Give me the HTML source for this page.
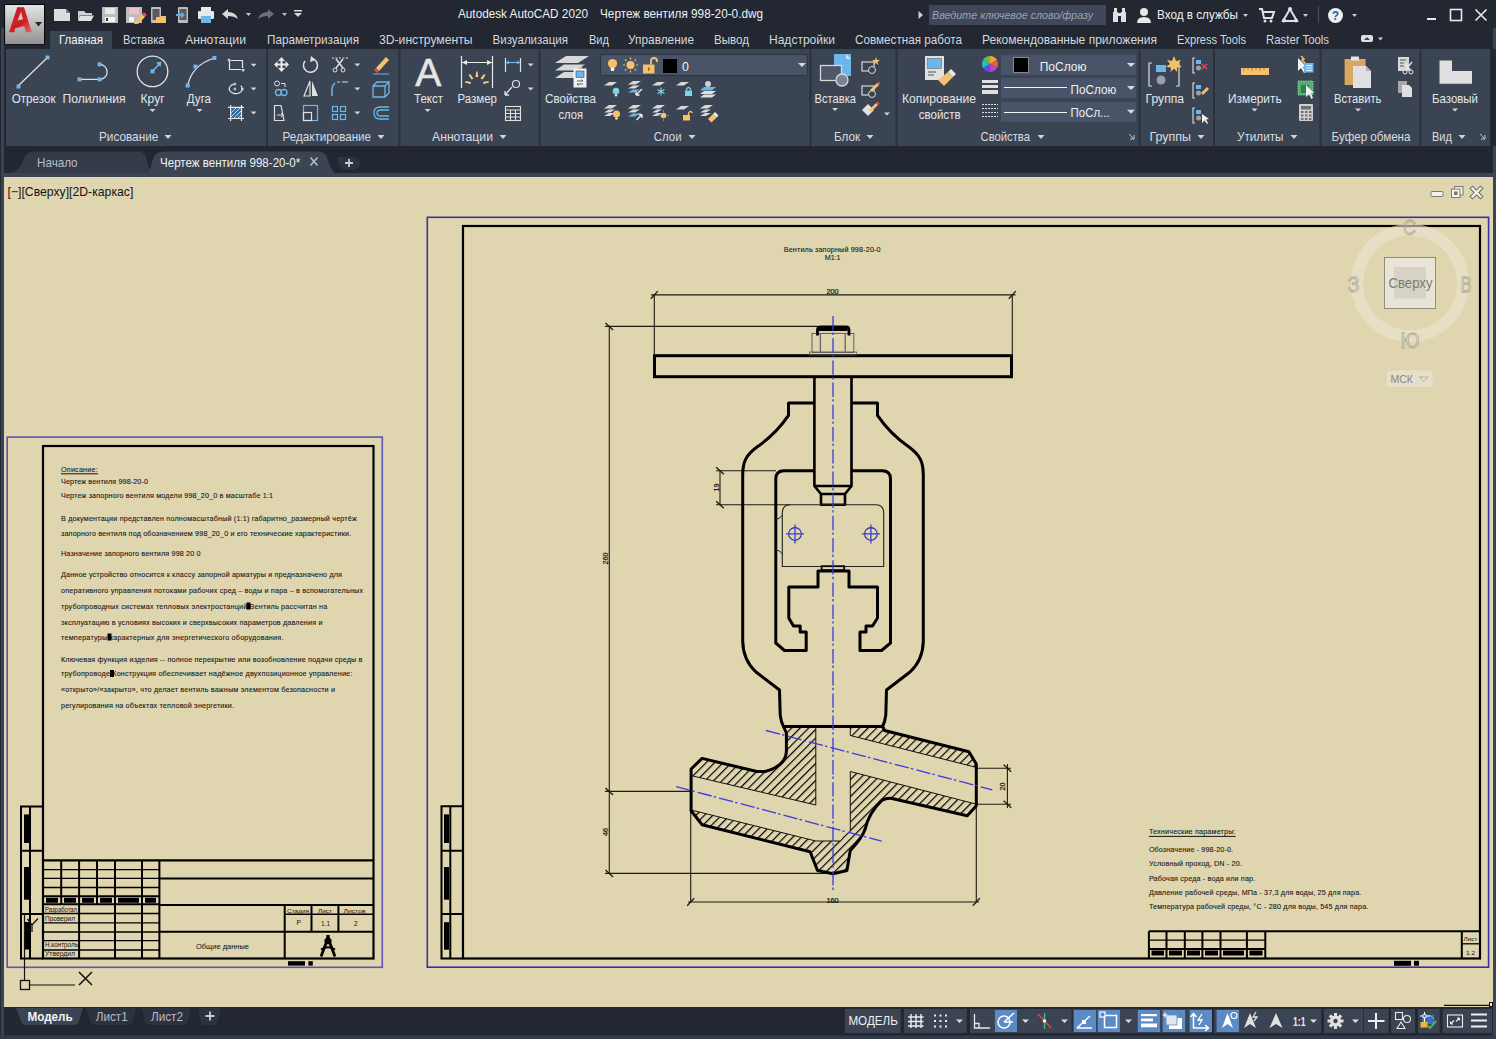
<!DOCTYPE html>
<html><head><meta charset="utf-8">
<style>
html,body{margin:0;padding:0;width:1496px;height:1039px;overflow:hidden;background:#222731;}
svg{display:block;}
</style></head><body>
<svg width="1496" height="1039" viewBox="0 0 1496 1039" shape-rendering="auto">
<rect x="0" y="0" width="1496" height="1039" fill="#222731" />
<rect x="1" y="28" width="3" height="1011" fill="#3a4454" />
<rect x="1493" y="28" width="3" height="1011" fill="#3a4454" />
<defs><linearGradient id="appg" x1="0" y1="0" x2="0" y2="1"><stop offset="0" stop-color="#e4e4e4"/><stop offset="1" stop-color="#929292"/></linearGradient><linearGradient id="redg" x1="0" y1="0" x2="1" y2="1"><stop offset="0" stop-color="#c41a20"/><stop offset="0.6" stop-color="#d42028"/><stop offset="1" stop-color="#e86468"/></linearGradient></defs>
<rect x="4.3" y="4.1" width="40.5" height="40.4" fill="#000" />
<rect x="5.1" y="5" width="38.9" height="39" fill="url(#appg)" />
<path d="M9 32.2 L17.3 7.2 H24.1 L31.8 32.2 H26 L24.3 26.3 L15.2 28.2 L14.3 32.2 Z M17.6 20.6 L23 19.3 L21 11.8 Z" fill="url(#redg)" fill-rule="evenodd"/>
<path d="M12 28 L27 20.5" stroke="#a81218" stroke-width="1.2" opacity="0.5"/>
<path d="M34.9 22.1 H42.1 L38.5 26.5 Z" fill="#2a2a2a"/>
<path d="M54 9 H66 L70 13 V21 H54 Z" fill="#dcdcdc"/><path d="M66 9 L70 13 H66 Z" fill="#222731" opacity="0.5"/>
<path d="M78 11 H84 L86 13 H92 V15 H80 L78 21 Z" fill="#cfcfcf"/><path d="M80 15.5 H94 L91 21 H78 Z" fill="#e0e0e0"/>
<path d="M102 7 H118 V23 H102 Z" fill="#bdbdbd"/><rect x="105" y="8" width="10" height="6" fill="#e8e8e8"/><rect x="105" y="17" width="10" height="5" fill="#f4f4f4"/><rect x="106" y="18" width="2" height="3" fill="#333"/>
<path d="M126 7 H142 V23 H126 Z" fill="#bdbdbd"/><rect x="129" y="8" width="10" height="6" fill="#f0c0c8"/><rect x="129" y="17" width="5" height="5" fill="#f4f4f4"/><path d="M135 22 L142 14 L145 17 L138 24 L134 24 Z" fill="#f5c26b"/><path d="M142 14 L144 12 L147 15 L145 17Z" fill="#e05050"/>
<rect x="151" y="7" width="10" height="16" rx="1" fill="#bdbdbd"/><rect x="152.5" y="9" width="7" height="11" fill="#5a5a5a"/><path d="M156 17 H160 L161 16 H166 V23 H156 Z" fill="#f5c26b"/>
<rect x="178" y="7" width="10" height="16" rx="1" fill="#bdbdbd"/><rect x="179.5" y="9" width="7" height="11" fill="#5a5a5a"/><path d="M176 14 H181 V11.5 L185 15 L181 18.5 V16 H176 Z" fill="#5ab0e8"/>
<rect x="201" y="7" width="10" height="5" fill="#e8e8e8"/><rect x="198" y="11" width="16" height="8" rx="1" fill="#e8e8e8"/><rect x="201" y="16" width="10" height="7" fill="#6cb6ea"/>
<path d="M222 14 L228 9 V12 Q236 12 238 19 Q234 16 228 16 V19 Z" fill="#d8d8d8"/><path d="M246 13 H251 L248.5 16 Z" fill="#cfcfcf"/>
<path d="M274 14 L268 9 V12 Q260 12 258 19 Q262 16 268 16 V19 Z" fill="#6a7080"/><path d="M282 13 H287 L284.5 16 Z" fill="#bfbfbf"/>
<rect x="294" y="10" width="8" height="1.5" fill="#d8d8d8"/><path d="M294 13 H302 L298 17 Z" fill="#d8d8d8"/>
<text x="458" y="18" font-size="12.6" fill="#eef0f2" textLength="130" lengthAdjust="spacingAndGlyphs" font-family="Liberation Sans" >Autodesk AutoCAD 2020</text>
<text x="600" y="18" font-size="12.6" fill="#eef0f2" textLength="163" lengthAdjust="spacingAndGlyphs" font-family="Liberation Sans" >Чертеж вентиля 998-20-0.dwg</text>
<path d="M918.5 11 L923 15 L918.5 19 Z" fill="#d0d0d0"/>
<rect x="929" y="5" width="177" height="20" fill="#3f4758" />
<text x="932" y="19" font-size="11.5" fill="#9aa2b0" font-style="italic" textLength="161" lengthAdjust="spacingAndGlyphs" font-family="Liberation Sans" >Введите ключевое слово/фразу</text>
<rect x="1113" y="12" width="5" height="10" fill="#e0e0e0"/><rect x="1121" y="12" width="5" height="10" fill="#e0e0e0"/><rect x="1117" y="13" width="5" height="3" fill="#e0e0e0"/><rect x="1114" y="8" width="3" height="4" fill="#e0e0e0"/><rect x="1122" y="8" width="3" height="4" fill="#e0e0e0"/>
<circle cx="1144" cy="12" r="4" fill="#e8e8e8"/><path d="M1137 23 Q1137 17 1144 17 Q1151 17 1151 23 Z" fill="#e8e8e8"/>
<text x="1157" y="19" font-size="12.6" fill="#eef0f2" textLength="81" lengthAdjust="spacingAndGlyphs" font-family="Liberation Sans" >Вход в службы</text>
<path d="M1243 14 H1248 L1245.5 17 Z" fill="#cfcfcf"/>
<path d="M1259 9 H1262 L1264 18 H1272 L1274 12 H1263" stroke="#e0e0e0" stroke-width="2" fill="none"/><circle cx="1265" cy="21" r="1.5" fill="#e0e0e0"/><circle cx="1271" cy="21" r="1.5" fill="#e0e0e0"/>
<path d="M1290 9 L1297 21 H1283 Z" stroke="#dce0f0" stroke-width="2" fill="none"/><circle cx="1290" cy="9" r="2" fill="#dce0f0"/><circle cx="1284" cy="20.5" r="2" fill="#dce0f0"/><circle cx="1296" cy="20.5" r="2" fill="#dce0f0"/>
<path d="M1303 14 H1308 L1305.5 17 Z" fill="#cfcfcf"/>
<rect x="1318" y="6" width="1" height="17" fill="#4a5060" />
<circle cx="1335.5" cy="15.5" r="7.5" fill="#f0f0f0"/>
<text x="1335.5" y="20" font-size="12" fill="#2060b0" font-weight="bold" text-anchor="middle" font-family="Liberation Sans" >?</text>
<path d="M1352 14 H1357 L1354.5 17 Z" fill="#cfcfcf"/>
<rect x="1427" y="18" width="9" height="2" fill="#e8e8e8" />
<rect x="1450.5" y="9.5" width="11" height="11" stroke="#e8e8e8" stroke-width="1.6" fill="none"/>
<path d="M1475.5 9.5 L1486.5 20.5 M1486.5 9.5 L1475.5 20.5" stroke="#e8e8e8" stroke-width="1.6"/>
<rect x="50" y="31" width="62" height="18" fill="#3b4453" />
<text x="59" y="43.5" font-size="12.4" fill="#f2f2f2" textLength="44" lengthAdjust="spacingAndGlyphs" font-family="Liberation Sans" >Главная</text>
<text x="123" y="43.5" font-size="12.4" fill="#d4d8de" textLength="41.5" lengthAdjust="spacingAndGlyphs" font-family="Liberation Sans" >Вставка</text>
<text x="185" y="43.5" font-size="12.4" fill="#d4d8de" textLength="61" lengthAdjust="spacingAndGlyphs" font-family="Liberation Sans" >Аннотации</text>
<text x="267" y="43.5" font-size="12.4" fill="#d4d8de" textLength="92" lengthAdjust="spacingAndGlyphs" font-family="Liberation Sans" >Параметризация</text>
<text x="379" y="43.5" font-size="12.4" fill="#d4d8de" textLength="93.5" lengthAdjust="spacingAndGlyphs" font-family="Liberation Sans" >3D-инструменты</text>
<text x="492.6" y="43.5" font-size="12.4" fill="#d4d8de" textLength="75.4" lengthAdjust="spacingAndGlyphs" font-family="Liberation Sans" >Визуализация</text>
<text x="589" y="43.5" font-size="12.4" fill="#d4d8de" textLength="20" lengthAdjust="spacingAndGlyphs" font-family="Liberation Sans" >Вид</text>
<text x="628" y="43.5" font-size="12.4" fill="#d4d8de" textLength="66" lengthAdjust="spacingAndGlyphs" font-family="Liberation Sans" >Управление</text>
<text x="714" y="43.5" font-size="12.4" fill="#d4d8de" textLength="35" lengthAdjust="spacingAndGlyphs" font-family="Liberation Sans" >Вывод</text>
<text x="769" y="43.5" font-size="12.4" fill="#d4d8de" textLength="66" lengthAdjust="spacingAndGlyphs" font-family="Liberation Sans" >Надстройки</text>
<text x="855" y="43.5" font-size="12.4" fill="#d4d8de" textLength="107" lengthAdjust="spacingAndGlyphs" font-family="Liberation Sans" >Совместная работа</text>
<text x="982" y="43.5" font-size="12.4" fill="#d4d8de" textLength="175" lengthAdjust="spacingAndGlyphs" font-family="Liberation Sans" >Рекомендованные приложения</text>
<text x="1177" y="43.5" font-size="12.4" fill="#d4d8de" textLength="69" lengthAdjust="spacingAndGlyphs" font-family="Liberation Sans" >Express Tools</text>
<text x="1266" y="43.5" font-size="12.4" fill="#d4d8de" textLength="63" lengthAdjust="spacingAndGlyphs" font-family="Liberation Sans" >Raster Tools</text>
<rect x="1361" y="35" width="12" height="7" rx="2" fill="#e0e0e0"/><path d="M1364 40 L1367 37 L1370 40Z" fill="#3b4453"/><path d="M1378 37.5 H1383 L1380.5 40.5 Z" fill="#cfcfcf"/>
<rect x="6" y="49" width="1484" height="97" fill="#3b4453" />
<rect x="1490" y="49" width="6" height="97" fill="#222731" />
<rect x="266" y="49" width="2" height="97" fill="#2b313c" />
<rect x="398.5" y="49" width="2" height="97" fill="#2b313c" />
<rect x="538.5" y="49" width="2" height="97" fill="#2b313c" />
<rect x="809.5" y="49" width="2" height="97" fill="#2b313c" />
<rect x="895.5" y="49" width="2" height="97" fill="#2b313c" />
<rect x="1138.5" y="49" width="2" height="97" fill="#2b313c" />
<rect x="1213" y="49" width="2" height="97" fill="#2b313c" />
<rect x="1319.5" y="49" width="2" height="97" fill="#2b313c" />
<rect x="1419.5" y="49" width="2" height="97" fill="#2b313c" />
<text x="99" y="140.6" font-size="12.4" fill="#d8dce2" textLength="59.3" lengthAdjust="spacingAndGlyphs" font-family="Liberation Sans" >Рисование</text>
<path d="M164.5 135 H171.5 L168 139 Z" fill="#d0d4da"/>
<text x="282.5" y="140.6" font-size="12.4" fill="#d8dce2" textLength="88.5" lengthAdjust="spacingAndGlyphs" font-family="Liberation Sans" >Редактирование</text>
<path d="M377.5 135 H384.5 L381 139 Z" fill="#d0d4da"/>
<text x="432" y="140.6" font-size="12.4" fill="#d8dce2" textLength="61" lengthAdjust="spacingAndGlyphs" font-family="Liberation Sans" >Аннотации</text>
<path d="M499.5 135 H506.5 L503 139 Z" fill="#d0d4da"/>
<text x="653.8" y="140.6" font-size="12.4" fill="#d8dce2" textLength="27.7" lengthAdjust="spacingAndGlyphs" font-family="Liberation Sans" >Слои</text>
<path d="M688.5 135 H695.5 L692 139 Z" fill="#d0d4da"/>
<text x="834" y="140.6" font-size="12.4" fill="#d8dce2" textLength="26" lengthAdjust="spacingAndGlyphs" font-family="Liberation Sans" >Блок</text>
<path d="M866.5 135 H873.5 L870 139 Z" fill="#d0d4da"/>
<text x="980.5" y="140.6" font-size="12.4" fill="#d8dce2" textLength="49.5" lengthAdjust="spacingAndGlyphs" font-family="Liberation Sans" >Свойства</text>
<path d="M1037.5 135 H1044.5 L1041 139 Z" fill="#d0d4da"/>
<text x="1149.4" y="140.6" font-size="12.4" fill="#d8dce2" textLength="41.6" lengthAdjust="spacingAndGlyphs" font-family="Liberation Sans" >Группы</text>
<path d="M1197.5 135 H1204.5 L1201 139 Z" fill="#d0d4da"/>
<text x="1237" y="140.6" font-size="12.4" fill="#d8dce2" textLength="46.5" lengthAdjust="spacingAndGlyphs" font-family="Liberation Sans" >Утилиты</text>
<path d="M1290.5 135 H1297.5 L1294 139 Z" fill="#d0d4da"/>
<text x="1331.6" y="140.6" font-size="12.4" fill="#d8dce2" textLength="78.9" lengthAdjust="spacingAndGlyphs" font-family="Liberation Sans" >Буфер обмена</text>
<text x="1432" y="140.6" font-size="12.4" fill="#d8dce2" textLength="20" lengthAdjust="spacingAndGlyphs" font-family="Liberation Sans" >Вид</text>
<path d="M1458.5 135 H1465.5 L1462 139 Z" fill="#d0d4da"/>
<path d="M1129 134 L1134 139 M1134 135 V139 H1130" stroke="#c0c4ca" stroke-width="1" fill="none"/>
<path d="M1480 134 L1485 139 M1485 135 V139 H1481" stroke="#c0c4ca" stroke-width="1" fill="none"/>
<text x="11.7" y="103.2" font-size="12.4" fill="#e4e6ea" textLength="43.9" lengthAdjust="spacingAndGlyphs" font-family="Liberation Sans" >Отрезок</text>
<text x="62.6" y="103.2" font-size="12.4" fill="#e4e6ea" textLength="62.9" lengthAdjust="spacingAndGlyphs" font-family="Liberation Sans" >Полилиния</text>
<text x="140.6" y="103.2" font-size="12.4" fill="#e4e6ea" textLength="24" lengthAdjust="spacingAndGlyphs" font-family="Liberation Sans" >Круг</text>
<text x="186.8" y="103.2" font-size="12.4" fill="#e4e6ea" textLength="24.2" lengthAdjust="spacingAndGlyphs" font-family="Liberation Sans" >Дуга</text>
<path d="M149.5 108.9 H155.5 L152.5 111.9 Z" fill="#d0d4da"/>
<path d="M196.5 108.9 H202.5 L199.5 111.9 Z" fill="#d0d4da"/>
<path d="M18 86 L47.5 57.5" stroke="#e0e0e0" stroke-width="1.3"/>
<rect x="16.5" y="84.5" width="4" height="4" fill="#6cb6ea" />
<rect x="45.5" y="55.5" width="4" height="4" fill="#6cb6ea" />
<path d="M79.5 79.4 H99.6 M99.6 64.4 A7.5 7.5 0 0 1 99.6 79.4" stroke="#e0e0e0" stroke-width="1.3" fill="none"/>
<rect x="77.5" y="77.4" width="4" height="4" fill="#6cb6ea" />
<rect x="97.6" y="77.4" width="4" height="4" fill="#6cb6ea" />
<rect x="97.6" y="62.400000000000006" width="4" height="4" fill="#6cb6ea" />
<circle cx="152.5" cy="71.4" r="15.3" stroke="#e0e0e0" stroke-width="1.3" fill="none"/><path d="M152.5 71.4 L160 63" stroke="#6cb6ea" stroke-width="1.5"/><path d="M161.5 61.5 L156 62.5 L160.5 67 Z" fill="#6cb6ea"/>
<rect x="150.5" y="69.4" width="4" height="4" fill="#6cb6ea" />
<path d="M187.7 85.5 Q192 65 214.4 58" stroke="#e0e0e0" stroke-width="1.3" fill="none"/>
<rect x="185.7" y="83.5" width="4" height="4" fill="#6cb6ea" />
<rect x="193.5" y="64.6" width="4" height="4" fill="#6cb6ea" />
<rect x="212.4" y="56" width="4" height="4" fill="#6cb6ea" />
<path d="M231 60.5 H242.5 V68 M241 69.5 H229.5 V61" stroke="#e8e8e8" stroke-width="1.2" fill="none"/>
<rect x="227.8" y="58.8" width="2.6" height="2.6" fill="#b8d8f0" />
<rect x="241.8" y="68.8" width="2.6" height="2.6" fill="#b8d8f0" />
<path d="M234 84.2 A6.5 4.8 0 1 0 240.8 85.8" stroke="#e8e8e8" stroke-width="1.2" fill="none"/>
<rect x="233.6" y="82.8" width="2.5" height="2.5" fill="#8fd0ee" />
<rect x="233.6" y="87.8" width="2.5" height="2.5" fill="#8fd0ee" />
<rect x="241" y="87.8" width="2.5" height="2.5" fill="#b8d8f0" />
<rect x="230.6" y="107.3" width="10.9" height="11.2" fill="#3a6a98"/>
<clipPath id="hc"><rect x="231.2" y="108" width="9.8" height="10"/></clipPath><g clip-path="url(#hc)" stroke="#a8d8f8" stroke-width="1"><path d="M228 116 L237 107 M228 120 L240 108 M232 120 L242 110 M236 120 L243 113"/></g>
<path d="M228 107.3 H244 M228 118.5 H244 M230.6 105 V121 M241.5 105 V121" stroke="#e8e8e8" stroke-width="1.2"/>
<path d="M250.6 63.8 H256.6 L253.6 66.8 Z" fill="#d0d4da"/>
<path d="M250.6 87.5 H256.6 L253.6 90.5 Z" fill="#d0d4da"/>
<path d="M250.6 111.5 H256.6 L253.6 114.5 Z" fill="#d0d4da"/>
<path d="M281.5 57 L285 61 H282.5 V63.5 H285.5 V61 L289 64.5 L285.5 68 V65.5 H282.5 V68 L285 68 L281.5 72 L278 68 H280.5 V65.5 H277.5 V68 L274 64.5 L277.5 61 V63.5 H280.5 V61 H278 Z" fill="#e8e8e8"/>
<path d="M315 60 A7 7 0 1 1 305 61" stroke="#e0e0e0" stroke-width="1.5" fill="none"/><path d="M311 56 L316 60 L310 62 Z" fill="#e0e0e0"/>
<path d="M332 58 H348" stroke="#e0e0e0" stroke-width="1" stroke-dasharray="2 1.5"/><path d="M336 59 L343 68 M343 59 L336 68" stroke="#e0e0e0" stroke-width="1.5"/><circle cx="335" cy="70" r="2" stroke="#e0e0e0" fill="none"/><circle cx="343" cy="70" r="2" stroke="#e0e0e0" fill="none"/>
<path d="M354.4 63.5 H360.4 L357.4 66.5 Z" fill="#d0d4da"/>
<path d="M376 68 L386 57 L389 60 L379 71 Z" fill="#f5c26b"/><path d="M374 70 L376 68 L379 71 L377 73 Z" fill="#e04848"/><path d="M373 74 H389" stroke="#6cb6ea" stroke-width="1"/>
<circle cx="277" cy="83.5" r="2.5" stroke="#e0e0e0" fill="none"/><path d="M281 83.5 H285 V87" stroke="#e0e0e0" fill="none"/><circle cx="278.5" cy="92.5" r="3" stroke="#6cb6ea" fill="none" stroke-width="1.3"/><circle cx="284" cy="92.5" r="3" stroke="#6cb6ea" fill="none" stroke-width="1.3"/>
<path d="M310 81 L304 96 H310 Z" stroke="#e0e0e0" stroke-width="1.2" fill="none"/><path d="M312 81 L318 96 H312 Z" fill="#e0e0e0"/>
<path d="M332 96 V90 Q332 82 340 82" stroke="#6cb6ea" stroke-width="1.5" fill="none" stroke-dasharray="14 2 20"/><path d="M342 82 H348" stroke="#e0e0e0" stroke-width="1"/>
<path d="M354.4 87.5 H360.4 L357.4 90.5 Z" fill="#d0d4da"/>
<path d="M373 86 L377 82 H389 V93 L385 97 H373 Z M373 86 H385 V97 M385 86 L389 82" stroke="#6cb6ea" stroke-width="1.3" fill="none"/>
<path d="M274.5 105.5 H281 L284 120.5 H274.5 Z" stroke="#e0e0e0" stroke-width="1.2" fill="none"/><path d="M277 115 H283 M281 113 L283.5 115 L281 117" stroke="#e0e0e0" stroke-width="1" fill="none"/>
<rect x="303.5" y="105.5" width="14" height="15" stroke="#6cb6ea" stroke-width="1.2" fill="none"/><rect x="303.5" y="112.5" width="8" height="8" stroke="#e0e0e0" stroke-width="1.2" fill="none"/>
<g stroke="#6cb6ea" stroke-width="1.2" fill="none"><rect x="332.5" y="106.5" width="5" height="5"/><rect x="340.5" y="106.5" width="5" height="5"/><rect x="332.5" y="114.5" width="5" height="5"/><rect x="340.5" y="114.5" width="5" height="5"/></g>
<path d="M354.4 111.5 H360.4 L357.4 114.5 Z" fill="#d0d4da"/>
<path d="M389 107 H380 Q374 107 374 113 Q374 119 380 119 H389 M389 110 H381 Q377 110 377 113 Q377 116 381 116 H389" stroke="#6cb6ea" stroke-width="1.3" fill="none"/>
<text x="428.3" y="85.6" font-size="39" fill="#e6e6e6" text-anchor="middle" textLength="26" lengthAdjust="spacingAndGlyphs" font-family="Liberation Sans" stroke="#e6e6e6" stroke-width="0.6">A</text>
<text x="414" y="103.2" font-size="12.4" fill="#e4e6ea" textLength="29" lengthAdjust="spacingAndGlyphs" font-family="Liberation Sans" >Текст</text>
<path d="M424.6 108.9 H430.6 L427.6 111.9 Z" fill="#d0d4da"/>
<path d="M461.5 56 V88 M492.5 56 V88 M462 62.5 H492" stroke="#e8e8e8" stroke-width="1.2"/><path d="M462 62.5 L467 60 V65 Z M492 62.5 L487 60 V65 Z" fill="#e8e8e8"/>
<g fill="#f5d080"><path d="M476.3 71.5 L477.5 71.5 L478.3 77 L475.5 77 Z"/><path d="M468.5 75 L470 74 L473.5 78.5 L471.5 79.5 Z"/><path d="M485.5 75 L484 74 L480.5 78.5 L482.5 79.5 Z"/><path d="M465 82.5 L465.5 81 L471 82 L470.5 84 Z"/><path d="M489 82.5 L488.5 81 L483 82 L483.5 84 Z"/></g>
<text x="457.6" y="103.2" font-size="12.4" fill="#e4e6ea" textLength="39.4" lengthAdjust="spacingAndGlyphs" font-family="Liberation Sans" >Размер</text>
<path d="M505.5 58 V72 M520.5 58 V72" stroke="#e0e0e0" stroke-width="1.2"/><path d="M506 62.5 H520" stroke="#6cb6ea" stroke-width="1.2"/><path d="M506 62.5 L509 60.5 V64.5 Z M520 62.5 L517 60.5 V64.5 Z" fill="#6cb6ea"/>
<path d="M527.6 63.5 H533.6 L530.6 66.5 Z" fill="#d0d4da"/>
<path d="M505 95 L512 87 M505 95 H509 M505 95 V91" stroke="#e0e0e0" stroke-width="1.3" fill="none"/><circle cx="516" cy="84" r="3.5" stroke="#e0e0e0" stroke-width="1.2" fill="none"/>
<path d="M527.6 87.5 H533.6 L530.6 90.5 Z" fill="#d0d4da"/>
<g stroke="#e0e0e0" stroke-width="1.1" fill="none"><rect x="505.5" y="106.5" width="15" height="14"/><path d="M505.5 110 H520.5 M505.5 113.5 H520.5 M505.5 117 H520.5 M510.5 110 V120.5 M515.5 110 V120.5"/></g>
<path d="M566 56 H589 L578 63 H555 Z" fill="#d8d8d8"/>
<path d="M564 64.5 H585 L576 70.5 H555 Z" fill="#d8d8d8"/>
<path d="M564 72 H585 L576 78 H555 Z" fill="#d8d8d8"/>
<rect x="573.5" y="68.5" width="13" height="19" fill="#f2f2f2"/><rect x="576" y="71" width="8" height="6.5" fill="#6cb6ea" stroke="#333" stroke-width="0.5"/><path d="M577 81 H583 L581.5 79.5 M583 84 H577 L578.5 85.5" stroke="#333" stroke-width="0.8" fill="none"/><rect x="578" y="67" width="4" height="1.5" fill="#ccc"/>
<text x="545" y="103.2" font-size="12.4" fill="#e4e6ea" textLength="51" lengthAdjust="spacingAndGlyphs" font-family="Liberation Sans" >Свойства</text>
<text x="558.5" y="118.5" font-size="12.4" fill="#e4e6ea" textLength="24.5" lengthAdjust="spacingAndGlyphs" font-family="Liberation Sans" >слоя</text>
<rect x="600.5" y="54.5" width="207" height="21" fill="#4a5468" />
<path d="M600.5 54.5 H807.5 V75.5 H600.5 Z" stroke="#2c3340" fill="none"/>
<circle cx="612.5" cy="63.5" r="4.6" fill="#f5c26b"/><path d="M610.5 67.5 H614.5 L614 71 H611 Z" fill="#f0f0f0"/>
<circle cx="630.5" cy="65" r="4" fill="#f5c26b"/><g stroke="#f5c26b" stroke-width="1.2"><path d="M630.5 57.5 V59.5 M630.5 70.5 V72.5 M623 65 H625 M636 65 H638 M625 59.5 L626.3 60.8 M634.7 69.2 L636 70.5 M636 59.5 L634.7 60.8 M625 70.5 L626.3 69.2"/></g>
<rect x="643" y="64.5" width="11.5" height="9" fill="#f5c26b"/><path d="M651 64.5 V61 Q651 58 654 58 Q657 58 657 61 V62" stroke="#f5c26b" stroke-width="1.8" fill="none"/><rect x="648" y="67.5" width="1.5" height="3" fill="#7a6030"/>
<rect x="663" y="59" width="14" height="14" fill="#000" />
<text x="682" y="70.5" font-size="12.4" fill="#f0f0f0" font-family="Liberation Sans" >0</text>
<path d="M798 63 H806 L802 67 Z" fill="#d8dce2"/>
<path d="M609 82 H617 L612 85.5 H604 Z" fill="#d8d8d8"/>
<circle cx="616" cy="91" r="3.3" fill="#7fd4e8"/><rect x="614.8" y="94.3" width="2.4" height="2" fill="#f0f0f0"/>
<path d="M633 81 H641 L636 84.5 H628 Z" fill="#d8d8d8"/>
<path d="M633 85.5 H640 L635 88.5 H628 Z" fill="#d8d8d8"/>
<path d="M633 89.5 H640 L635 92.5 H628 Z" fill="#6cb6ea"/>
<path d="M642 89 L636.5 94.5 M636 95 H639.5 M636 95 V91.5" stroke="#f0f0f0" stroke-width="1.3" fill="none"/>
<path d="M657 82 H665 L660 85.5 H652 Z" fill="#d8d8d8"/>
<g stroke="#7fd4e8" stroke-width="1.1"><path d="M661 87.5 V95.5 M657.5 89.5 L664.5 93.5 M664.5 89.5 L657.5 93.5"/></g>
<path d="M681 82 H689 L684 85.5 H676 Z" fill="#d8d8d8"/>
<rect x="685" y="90.5" width="7" height="5.5" fill="#7fd4e8"/><path d="M686.5 90.5 V89 Q688.5 86 690.5 89 V90.5" stroke="#7fd4e8" stroke-width="1.3" fill="none"/>
<circle cx="708" cy="84" r="3" fill="#d0d0d0"/>
<path d="M704 87 H716 L712 90.5 H700 Z" fill="#6cb6ea"/>
<path d="M704 91 H716 L712 94 H700 Z" fill="#e0e0e0"/>
<path d="M704 94.5 H716 L712 97.5 H700 Z" fill="#e0e0e0"/>
<path d="M609 105 H617 L612 108.5 H604 Z" fill="#d8d8d8"/>
<path d="M609 109.5 H615 L610 112.5 H604 Z" fill="#d8d8d8"/>
<path d="M609 113 H615 L610 116 H604 Z" fill="#d8d8d8"/>
<circle cx="616.5" cy="114" r="3.5" fill="#f5c26b"/><rect x="615.3" y="117.5" width="2.4" height="2" fill="#f0f0f0"/>
<path d="M633 105 H641 L636 108.5 H628 Z" fill="#d8d8d8"/>
<path d="M633 109.5 H640 L635 112.5 H628 Z" fill="#d8d8d8"/>
<path d="M633 113.5 H640 L635 116.5 H628 Z" fill="#6cb6ea"/>
<path d="M636.5 120 L642 114.5 M642 114.5 H638.5 M642 114.5 V118" stroke="#f0f0f0" stroke-width="1.3" fill="none"/>
<path d="M657 105 H665 L660 108.5 H652 Z" fill="#d8d8d8"/>
<path d="M657 109.5 H662 L657 112.5 H652 Z" fill="#d8d8d8"/>
<path d="M657 113 H662 L657 116 H652 Z" fill="#d8d8d8"/>
<circle cx="663.5" cy="115.5" r="2.8" fill="#f5c26b"/><g stroke="#f5c26b" stroke-width="1"><path d="M663.5 110.5 V111.5 M663.5 119.5 V120.5 M658.5 115.5 H659.5 M667.5 115.5 H668.5"/></g>
<path d="M681 106 H689 L684 109.5 H676 Z" fill="#d8d8d8"/>
<rect x="683" y="115" width="7" height="5.5" fill="#f5c26b"/><path d="M688.5 115 V113 Q690.5 110 692.5 113" stroke="#f5c26b" stroke-width="1.3" fill="none"/>
<path d="M705 105 H713 L708 108.5 H700 Z" fill="#d8d8d8"/>
<path d="M705 109.5 H711 L706 112.5 H700 Z" fill="#d8d8d8"/>
<path d="M705 113 H711 L706 116 H700 Z" fill="#d8d8d8"/>
<path d="M708 119 L713 114 L716.5 117.5 L711.5 122.5 Z" fill="#f5c26b"/><path d="M713 114 L715 112 L718.5 115.5 L716.5 117.5 Z" fill="#f0f0f0"/>
<rect x="834" y="54" width="17" height="22" fill="#6cb6ea"/><path d="M846 54 L851 59 H846 Z" fill="#c8e4f8"/>
<rect x="820.5" y="65.5" width="21" height="15" stroke="#d8d8d8" stroke-width="1.3" fill="#4e5868"/><circle cx="842" cy="80" r="6" stroke="#d8d8d8" stroke-width="1.3" fill="#7a8494"/>
<text x="814.6" y="103.2" font-size="12.4" fill="#e4e6ea" textLength="41.4" lengthAdjust="spacingAndGlyphs" font-family="Liberation Sans" >Вставка</text>
<path d="M832 108.1 H838 L835 111.1 Z" fill="#d0d4da"/>
<rect x="862" y="62" width="12" height="9" stroke="#d8d8d8" stroke-width="1.2" fill="none"/><circle cx="872" cy="70" r="3.5" stroke="#d8d8d8" fill="#3b4453"/><path d="M876 57 L877 60 L880 60 L877.5 62 L878.5 65 L876 63 L873.5 65 L874.5 62 L872 60 L875 60Z" fill="#f5c26b"/>
<rect x="862" y="86" width="12" height="9" stroke="#d8d8d8" stroke-width="1.2" fill="none"/><circle cx="872" cy="94" r="3.5" stroke="#d8d8d8" fill="#3b4453"/><path d="M870 90 L877 83 L879 85 L872 92 Z" fill="#f5c26b"/><path d="M877 83 L878.5 81.5 L880.5 83.5 L879 85Z" fill="#e05050"/>
<path d="M862 110 L868 116 L874 110 L868 104 Z" fill="#e0e0e0"/><path d="M869 110 L876 103 L878 105 L871 112 Z" fill="#f5c26b"/><path d="M876 103 L877.5 101.5 L879.5 103.5 L878 105Z" fill="#e05050"/>
<path d="M884 112.5 H890 L887 115.5 Z" fill="#d0d4da"/>
<rect x="925" y="56" width="19" height="24" fill="#e0e0e0"/><rect x="927.5" y="58.5" width="14" height="10" fill="#6cb6ea" stroke="#555" stroke-width="0.5"/><path d="M928 72 H936 M928 75 H934" stroke="#555" stroke-width="1"/>
<path d="M938 80 L948 72 L953 77 L944 86 Z" fill="#f5c26b"/><path d="M948 72 L951 69 L956 74 L953 77Z" fill="#e8e8e8"/>
<text x="902" y="103.2" font-size="12.4" fill="#e4e6ea" textLength="74" lengthAdjust="spacingAndGlyphs" font-family="Liberation Sans" >Копирование</text>
<text x="918.7" y="118.5" font-size="12.4" fill="#e4e6ea" textLength="41.9" lengthAdjust="spacingAndGlyphs" font-family="Liberation Sans" >свойств</text>
<g transform="translate(990,64)"><path d="M0 0 L0.00 -8.00 A8 8 0 0 1 6.93 -4.00 Z" fill="#f5a030"/><path d="M0 0 L6.93 -4.00 A8 8 0 0 1 6.93 4.00 Z" fill="#e85a48"/><path d="M0 0 L6.93 4.00 A8 8 0 0 1 0.00 8.00 Z" fill="#b048c8"/><path d="M0 0 L0.00 8.00 A8 8 0 0 1 -6.93 4.00 Z" fill="#6848e0"/><path d="M0 0 L-6.93 4.00 A8 8 0 0 1 -6.93 -4.00 Z" fill="#30b8c0"/><path d="M0 0 L-6.93 -4.00 A8 8 0 0 1 -0.00 -8.00 Z" fill="#58c058"/></g>
<g fill="#e0e0e0"><rect x="982" y="80" width="16" height="3"/><rect x="982" y="85" width="16" height="3"/><rect x="982" y="90" width="16" height="4"/></g>
<g stroke="#e0e0e0" stroke-width="1" stroke-dasharray="2 1"><path d="M982 104.5 H998 M982 108.5 H998 M982 112.5 H998 M982 116.5 H998"/></g>
<rect x="1001" y="55" width="135" height="20" fill="#4a5468" />
<path d="M1127 63.0 H1135 L1131 67.0 Z" fill="#d8dce2"/>
<rect x="1001" y="78" width="135" height="20" fill="#4a5468" />
<path d="M1127 86.0 H1135 L1131 90.0 Z" fill="#d8dce2"/>
<rect x="1001" y="102" width="135" height="19.700000000000003" fill="#4a5468" />
<path d="M1127 109.85 H1135 L1131 113.85 Z" fill="#d8dce2"/>
<rect x="1013" y="57" width="16" height="16" fill="#000" />
<rect x="1013.5" y="57.5" width="15" height="15" stroke="#888" stroke-width="1" fill="none"/>
<text x="1039.7" y="70.5" font-size="12.4" fill="#f0f0f0" textLength="46.8" lengthAdjust="spacingAndGlyphs" font-family="Liberation Sans" >ПоСлою</text>
<path d="M1004 87.5 H1067 M1004 112.5 H1067" stroke="#f4f4f4" stroke-width="1.1"/>
<text x="1070.6" y="93.5" font-size="12.4" fill="#f0f0f0" textLength="45.7" lengthAdjust="spacingAndGlyphs" font-family="Liberation Sans" >ПоСлою</text>
<text x="1070.6" y="117" font-size="12.4" fill="#f0f0f0" textLength="39" lengthAdjust="spacingAndGlyphs" font-family="Liberation Sans" >ПоСл...</text>
<path d="M1152 63 H1149 V86 H1152 M1176 63 H1179 V86 H1176" stroke="#e0e0e0" stroke-width="1.2" fill="none"/><rect x="1156" y="65" width="10" height="7" fill="#6cb6ea"/><circle cx="1161" cy="80" r="4.5" fill="#9aa0a8"/>
<path d="M1174 56 L1176 61 L1181 60 L1178 64 L1182 67 L1177 67.5 L1177 72 L1174 68.5 L1170.5 72 L1171 67.5 L1166 67 L1170 64 L1167 60 L1172 61 Z" fill="#f5c26b"/>
<text x="1145.6" y="103.2" font-size="12.4" fill="#e4e6ea" textLength="38.4" lengthAdjust="spacingAndGlyphs" font-family="Liberation Sans" >Группа</text>
<path d="M1195 58 H1193 V73 H1195" stroke="#e0e0e0" stroke-width="1.1" fill="none"/><rect x="1196" y="60" width="5" height="4" fill="#6cb6ea"/><circle cx="1198.5" cy="68" r="2.5" fill="#9aa0a8"/><path d="M1202 64 L1207 69 M1207 64 L1202 69" stroke="#e04848" stroke-width="1.5"/>
<path d="M1195 83 H1193 V98 H1195" stroke="#e0e0e0" stroke-width="1.1" fill="none"/><rect x="1196" y="85" width="5" height="4" fill="#6cb6ea"/><circle cx="1198.5" cy="93" r="2.5" fill="#9aa0a8"/><path d="M1201 93 L1207 87 L1209 89 L1203 95 Z" fill="#f5c26b"/>
<path d="M1195 108 H1193 V123 H1195" stroke="#e0e0e0" stroke-width="1.1" fill="none"/><rect x="1196" y="110" width="5" height="4" fill="#6cb6ea"/><circle cx="1198.5" cy="118" r="2.5" fill="#9aa0a8"/><path d="M1202 114 L1202 123 L1204.5 120.5 L1207 124 L1208 123 L1206 119.5 L1209 119 Z" fill="#f0f0f0"/>
<rect x="1241" y="68" width="28" height="7" fill="#f5c26b" />
<path d="M1244 68 V71 M1248 68 V70 M1252 68 V71 M1256 68 V70 M1260 68 V71 M1264 68 V70" stroke="#a07830" stroke-width="0.8"/>
<text x="1228" y="103.2" font-size="12.4" fill="#e4e6ea" textLength="53.6" lengthAdjust="spacingAndGlyphs" font-family="Liberation Sans" >Измерить</text>
<path d="M1251.5 108.5 H1257.5 L1254.5 111.5 Z" fill="#d0d4da"/>
<path d="M1298 58 V71 L1301 68 L1304 73 L1306 72 L1303 67 L1307 67 Z" fill="#f0f0f0"/><rect x="1304" y="63" width="9.5" height="9.5" fill="#6cb6ea"/><path d="M1306 65.5 H1312 M1306 68 H1312 M1306 70.5 H1312" stroke="#fff" stroke-width="0.8"/><path d="M1301 56 L1304 59 L1302 60 L1305 63" stroke="#f5c26b" stroke-width="1.5" fill="none"/>
<rect x="1298" y="81" width="15" height="14" fill="#5ab878" opacity="0.9" stroke="#80e0a0" stroke-dasharray="1.5 1"/><rect x="1301" y="85" width="8" height="8" fill="#2f8050"/><path d="M1306 85 V97 L1309 94 L1311.5 99 L1313 98 L1311 93 L1314 93 Z" fill="#f0f0f0"/>
<rect x="1299" y="104" width="14" height="17" rx="1" fill="#d0d0d0"/><rect x="1301" y="106" width="10" height="3.5" fill="#707070"/><g fill="#707070"><rect x="1301" y="111" width="2.5" height="2"/><rect x="1305" y="111" width="2.5" height="2"/><rect x="1309" y="111" width="2.5" height="2"/><rect x="1301" y="114.5" width="2.5" height="2"/><rect x="1305" y="114.5" width="2.5" height="2"/><rect x="1309" y="114.5" width="2.5" height="2"/><rect x="1301" y="118" width="2.5" height="2"/><rect x="1305" y="118" width="2.5" height="2"/><rect x="1309" y="118" width="2.5" height="2"/></g>
<rect x="1344.6" y="59" width="21" height="26" fill="#d9a860"/><rect x="1351" y="56.5" width="8" height="4" fill="#e8e8e8"/><path d="M1353 66 H1366 L1371 71 V88 H1353 Z" fill="#e0e0e0"/><path d="M1366 66 L1371 71 H1366 Z" fill="#b0b0b0"/>
<text x="1334" y="103.2" font-size="12.4" fill="#e4e6ea" textLength="47.4" lengthAdjust="spacingAndGlyphs" font-family="Liberation Sans" >Вставить</text>
<path d="M1355 108.5 H1361 L1358 111.5 Z" fill="#d0d4da"/>
<rect x="1398" y="57" width="11" height="14" fill="#d8d8d8"/><path d="M1400 60 H1406 M1400 63 H1406 M1400 66 H1404" stroke="#555" stroke-width="1"/><path d="M1404 62 L1412 72 M1412 62 L1404 72" stroke="#e8e8e8" stroke-width="1.3"/><circle cx="1405" cy="72" r="2" stroke="#e8e8e8" fill="#3b4453"/><circle cx="1411" cy="72" r="2" stroke="#e8e8e8" fill="#3b4453"/>
<rect x="1398" y="81" width="9" height="12" fill="#a8a8a8"/><path d="M1402 85 H1409 L1412 88 V97 H1402 Z" fill="#e0e0e0"/>
<path d="M1439.5 60.5 H1452 V71 H1472 V83.7 H1439.5 Z" fill="#e0e0e0"/>
<text x="1432" y="103.2" font-size="12.4" fill="#e4e6ea" textLength="46" lengthAdjust="spacingAndGlyphs" font-family="Liberation Sans" >Базовый</text>
<path d="M1452 108.5 H1458 L1455 111.5 Z" fill="#d0d4da"/>
<rect x="0" y="146" width="1496" height="31" fill="#222731" />
<rect x="1" y="146" width="3" height="31" fill="#3a4454" />
<rect x="1493" y="146" width="3" height="31" fill="#3a4454" />
<rect x="4" y="173" width="1489" height="4" fill="#3b4453" />
<path d="M8 173 Q20 172 23 161 Q25.5 151.5 35 151.5 H138 Q145 151.5 146.5 159 Q148 171 156 173 Z" fill="#343b48"/>
<path d="M140 177 Q150 175 152 162 Q154 151.5 164 151.5 H318 Q326 151.5 328 160 Q331 175 345 177 Z" fill="#3b4453"/>
<path d="M337 157 H353 Q359.5 157 360 163 Q360.5 169 354 169.5 H344 Q340 169.5 339 164 Z" fill="#2d3440"/>
<text x="37" y="167" font-size="12.4" fill="#b8bec8" textLength="40.6" lengthAdjust="spacingAndGlyphs" font-family="Liberation Sans" >Начало</text>
<text x="160" y="167" font-size="12.4" fill="#f0f2f4" textLength="140.3" lengthAdjust="spacingAndGlyphs" font-family="Liberation Sans" >Чертеж вентиля 998-20-0*</text>
<path d="M310.5 157.5 L317.5 165.5 M317.5 157.5 L310.5 165.5" stroke="#b4b8c0" stroke-width="1.7"/>
<path d="M345 163 H353 M349 159 V167" stroke="#c8ccd4" stroke-width="1.8"/>
<rect x="4" y="177" width="1489" height="830" fill="#dfd5ae" />
<defs><pattern id="hatch" patternUnits="userSpaceOnUse" width="6" height="20" patternTransform="rotate(45)"><rect x="0" y="0" width="1.2" height="20" fill="#000"/></pattern></defs>
<text x="7.5" y="195.7" font-size="12.2" fill="#141414" textLength="125.8" lengthAdjust="spacing" font-family="Liberation Sans" >[−][Сверху][2D-каркас]</text>
<rect x="1431" y="191.5" width="12" height="5" rx="1" stroke="#7a7a74" stroke-width="1" fill="#f4f2ea"/>
<rect x="1454.5" y="186.5" width="8.5" height="8.5" stroke="#7a7a74" stroke-width="1" fill="#f4f2ea"/><rect x="1451.5" y="189" width="8.5" height="8.5" stroke="#7a7a74" stroke-width="1" fill="#f4f2ea"/><rect x="1454" y="191.5" width="3.5" height="3.5" fill="#7a7a74"/>
<path d="M1472.5 188.5 L1480.5 196.5 M1480.5 188.5 L1472.5 196.5" stroke="#6a6a64" stroke-width="4.4" stroke-linecap="square"/><path d="M1472.5 188.5 L1480.5 196.5 M1480.5 188.5 L1472.5 196.5" stroke="#f4f2ea" stroke-width="2.4" stroke-linecap="square"/>
<rect x="7.2" y="437.1" width="375.1" height="530.2" stroke="#5c54b8" stroke-width="1.6" fill="none" />
<rect x="43" y="446" width="330.5" height="512.5" stroke="#000" stroke-width="2.2" fill="none" />
<path d="M43 806.5 H21 V958.5 H43 M30 806.5 V958.5 M21 850.8 H43 M21 914 H43" stroke="#000" stroke-width="2" fill="none"/>
<rect x="24" y="814.4" width="5" height="28.600000000000023" fill="#000" />
<rect x="24" y="867" width="5" height="32.700000000000045" fill="#000" />
<rect x="24" y="922" width="5" height="27.5" fill="#000" />
<path d="M43 860.4 H373.5" stroke="#000" stroke-width="2.2"/>
<path d="M61.2 860.4 L61.2 904.3" stroke="#000" stroke-width="2" />
<path d="M79.1 860.4 L79.1 958.5" stroke="#000" stroke-width="2" />
<path d="M97 860.4 L97 904.3" stroke="#000" stroke-width="2" />
<path d="M115 860.4 L115 958.5" stroke="#000" stroke-width="2" />
<path d="M142 860.4 L142 958.5" stroke="#000" stroke-width="2" />
<path d="M159.4 860.4 L159.4 958.5" stroke="#000" stroke-width="2" />
<path d="M43 869.6 L159.4 869.6" stroke="#000" stroke-width="1.3" />
<path d="M43 878.3 L159.4 878.3" stroke="#000" stroke-width="1.3" />
<path d="M43 887.5 L159.4 887.5" stroke="#000" stroke-width="1.3" />
<path d="M43 896.2 L159.4 896.2" stroke="#000" stroke-width="2" />
<path d="M43 904.3 L159.4 904.3" stroke="#000" stroke-width="2" />
<path d="M43 913.5 L159.4 913.5" stroke="#000" stroke-width="1.3" />
<path d="M43 922.8 L159.4 922.8" stroke="#000" stroke-width="1.3" />
<path d="M43 932 L159.4 932" stroke="#000" stroke-width="1.3" />
<path d="M43 940.7 L159.4 940.7" stroke="#000" stroke-width="1.3" />
<path d="M43 950 L159.4 950" stroke="#000" stroke-width="1.3" />
<rect x="46" y="897.8" width="12" height="5" fill="#000" />
<rect x="64" y="897.8" width="12" height="5" fill="#000" />
<rect x="82" y="897.8" width="12" height="5" fill="#000" />
<rect x="100" y="897.8" width="12" height="5" fill="#000" />
<rect x="118" y="897.8" width="21" height="5" fill="#000" />
<rect x="145" y="897.8" width="11" height="5" fill="#000" />
<text x="45" y="912" font-size="6.5" fill="#111" textLength="32" lengthAdjust="spacingAndGlyphs" font-family="Liberation Sans" >Разработал</text>
<text x="45" y="920.5" font-size="6.5" fill="#111" textLength="30" lengthAdjust="spacingAndGlyphs" font-family="Liberation Sans" >Проверил</text>
<text x="45" y="946.5" font-size="6.5" fill="#111" textLength="33" lengthAdjust="spacingAndGlyphs" font-family="Liberation Sans" >Н.контроль</text>
<text x="45" y="955.5" font-size="6.5" fill="#111" textLength="30" lengthAdjust="spacingAndGlyphs" font-family="Liberation Sans" >Утвердил</text>
<path d="M159.4 878.5 L373.5 878.5" stroke="#000" stroke-width="2" />
<path d="M159.4 905.1 L373.5 905.1" stroke="#000" stroke-width="2" />
<path d="M159.4 931.7 L373.5 931.7" stroke="#000" stroke-width="2" />
<path d="M284.7 905.1 L284.7 958.5" stroke="#000" stroke-width="2" />
<path d="M311.5 905.1 L311.5 931.7" stroke="#000" stroke-width="2" />
<path d="M338.4 905.1 L338.4 931.7" stroke="#000" stroke-width="2" />
<path d="M284.7 914.3 L373.5 914.3" stroke="#000" stroke-width="1.5" />
<text x="287" y="912.5" font-size="6" fill="#111" textLength="22" lengthAdjust="spacingAndGlyphs" font-family="Liberation Sans" >Стадия</text>
<text x="318" y="912.5" font-size="6" fill="#111" textLength="14" lengthAdjust="spacingAndGlyphs" font-family="Liberation Sans" >Лист</text>
<text x="343.5" y="912.5" font-size="6" fill="#111" textLength="22" lengthAdjust="spacingAndGlyphs" font-family="Liberation Sans" >Листов</text>
<text x="296.5" y="925" font-size="6.5" fill="#111" font-family="Liberation Sans" >Р</text>
<text x="321" y="925.5" font-size="6.5" fill="#111" font-family="Liberation Sans" >1.1</text>
<text x="354" y="925.5" font-size="6.5" fill="#111" font-family="Liberation Sans" >2</text>
<text x="196" y="948.5" font-size="7.5" fill="#111" textLength="53" lengthAdjust="spacingAndGlyphs" font-family="Liberation Sans" >Общие данные</text>
<rect x="326.3" y="935" width="3.4" height="3.5" fill="#000"/><ellipse cx="328" cy="941" rx="3.6" ry="3.2" fill="#000"/><path d="M326.5 942 L321 956.5 M329.5 942 L335 956.5" stroke="#000" stroke-width="2.8" fill="none"/><path d="M321 949.5 Q328 945 335 949.5" stroke="#000" stroke-width="2" fill="none"/>
<rect x="288" y="961.2" width="17" height="4.4" fill="#000" />
<rect x="308.4" y="961.2" width="4.4" height="4.4" fill="#000" />
<text x="61" y="471.9" font-size="7.2" fill="#141414" textLength="36.7" lengthAdjust="spacing" font-family="Liberation Sans" stroke="#141414" stroke-width="0.08">Описание:</text>
<text x="61" y="484.4" font-size="7.2" fill="#141414" textLength="87" lengthAdjust="spacing" font-family="Liberation Sans" stroke="#141414" stroke-width="0.08">Чертеж вентиля 998-20-0</text>
<text x="61" y="498.4" font-size="7.2" fill="#141414" textLength="212" lengthAdjust="spacing" font-family="Liberation Sans" stroke="#141414" stroke-width="0.08">Чертеж запорного вентиля модели 998_20_0 в масштабе 1:1</text>
<text x="61" y="520.7" font-size="7.2" fill="#141414" textLength="295.8" lengthAdjust="spacing" font-family="Liberation Sans" stroke="#141414" stroke-width="0.08">В документации представлен полномасштабный (1:1) габаритно_размерный чертёж</text>
<text x="61" y="535.5" font-size="7.2" fill="#141414" textLength="290.2" lengthAdjust="spacing" font-family="Liberation Sans" stroke="#141414" stroke-width="0.08">запорного вентиля под обозначением 998_20_0 и его технические характеристики.</text>
<text x="61" y="556.2" font-size="7.2" fill="#141414" textLength="139.4" lengthAdjust="spacing" font-family="Liberation Sans" stroke="#141414" stroke-width="0.08">Назначение запорного вентиля 998 20 0</text>
<text x="61" y="577.4" font-size="7.2" fill="#141414" textLength="281" lengthAdjust="spacing" font-family="Liberation Sans" stroke="#141414" stroke-width="0.08">Данное устройство относится к классу запорной арматуры и предназначено для</text>
<text x="61" y="593.3" font-size="7.2" fill="#141414" textLength="302" lengthAdjust="spacing" font-family="Liberation Sans" stroke="#141414" stroke-width="0.08">оперативного управления потоками рабочих сред – воды и пара – в вспомогательных</text>
<text x="61" y="608.7" font-size="7.2" fill="#141414" textLength="266.2" lengthAdjust="spacing" font-family="Liberation Sans" stroke="#141414" stroke-width="0.08">трубопроводных системах тепловых электростанций  Вентиль рассчитан на</text>
<text x="61" y="624.6" font-size="7.2" fill="#141414" textLength="261.4" lengthAdjust="spacing" font-family="Liberation Sans" stroke="#141414" stroke-width="0.08">эксплуатацию в условиях высоких и сверхвысоких параметров давления и</text>
<text x="61" y="640" font-size="7.2" fill="#141414" textLength="222.4" lengthAdjust="spacing" font-family="Liberation Sans" stroke="#141414" stroke-width="0.08">температуры  характерных для энергетического оборудования.</text>
<text x="61" y="661.7" font-size="7.2" fill="#141414" textLength="301.4" lengthAdjust="spacing" font-family="Liberation Sans" stroke="#141414" stroke-width="0.08">Ключевая функция изделия -- полное перекрытие или возобновление подачи среды в</text>
<text x="61" y="676.2" font-size="7.2" fill="#141414" textLength="291.3" lengthAdjust="spacing" font-family="Liberation Sans" stroke="#141414" stroke-width="0.08">трубопроводе  Конструкция обеспечивает надёжное двухпозиционное управление:</text>
<text x="61" y="692.4" font-size="7.2" fill="#141414" textLength="274" lengthAdjust="spacing" font-family="Liberation Sans" stroke="#141414" stroke-width="0.08">«открыто»/«закрыто», что делает вентиль важным элементом безопасности и</text>
<text x="61" y="708.3" font-size="7.2" fill="#141414" textLength="173" lengthAdjust="spacing" font-family="Liberation Sans" stroke="#141414" stroke-width="0.08">регулирования на объектах тепловой энергетики.</text>
<path d="M61 473.8 L98 473.8" stroke="#161616" stroke-width="1" />
<rect x="246.5" y="602.5" width="4" height="7" fill="#000" />
<rect x="107.5" y="633.5" width="4" height="7" fill="#000" />
<rect x="110" y="670" width="4" height="7" fill="#000" />
<rect x="427.3" y="217.3" width="1061.3" height="749.9" stroke="#3a30a8" stroke-width="1.6" fill="none" />
<rect x="463" y="226" width="1017" height="732.5" stroke="#000" stroke-width="2.2" fill="none" />
<path d="M463 806.3 H441.5 V958.5 H463 M450.3 806.3 V958.5 M441.5 850.8 H463 M441.5 914 H463" stroke="#000" stroke-width="2" fill="none"/>
<rect x="444" y="814.4" width="5" height="28.600000000000023" fill="#000" />
<rect x="444" y="867" width="5" height="32.700000000000045" fill="#000" />
<rect x="444" y="922.2" width="5" height="27.5" fill="#000" />
<path d="M1148.9 931.2 L1480 931.2" stroke="#000" stroke-width="2" />
<path d="M1148.9 931.2 L1148.9 958.5" stroke="#000" stroke-width="2" />
<path d="M1166.5 931.2 L1166.5 958.5" stroke="#000" stroke-width="2" />
<path d="M1184.8 931.2 L1184.8 958.5" stroke="#000" stroke-width="2" />
<path d="M1202.4 931.2 L1202.4 958.5" stroke="#000" stroke-width="2" />
<path d="M1220.5 931.2 L1220.5 958.5" stroke="#000" stroke-width="2" />
<path d="M1246.9 931.2 L1246.9 958.5" stroke="#000" stroke-width="2" />
<path d="M1265.3 931.2 L1265.3 958.5" stroke="#000" stroke-width="2" />
<path d="M1148.9 940.2 L1265.3 940.2" stroke="#000" stroke-width="1.3" />
<path d="M1148.9 949 L1265.3 949" stroke="#000" stroke-width="2" />
<rect x="1151.5" y="950.5" width="12.5" height="5" fill="#000" />
<rect x="1169" y="950.5" width="13" height="5" fill="#000" />
<rect x="1187" y="950.5" width="13" height="5" fill="#000" />
<rect x="1205" y="950.5" width="13" height="5" fill="#000" />
<rect x="1223" y="950.5" width="21" height="5" fill="#000" />
<rect x="1249.5" y="950.5" width="13.0" height="5" fill="#000" />
<path d="M1461.8 931.2 L1461.8 958.5" stroke="#000" stroke-width="2" />
<path d="M1461.8 943.8 L1480 943.8" stroke="#000" stroke-width="1.3" />
<text x="1463.5" y="940.5" font-size="6" fill="#111" textLength="14" lengthAdjust="spacingAndGlyphs" font-family="Liberation Sans" >Лист</text>
<text x="1466" y="955" font-size="6" fill="#111" textLength="9" lengthAdjust="spacingAndGlyphs" font-family="Liberation Sans" >1.2</text>
<rect x="1394" y="960.8" width="17" height="5" fill="#000" />
<rect x="1414" y="960.8" width="5" height="5" fill="#000" />
<text x="1148.9" y="833.9" font-size="7.2" fill="#141414" textLength="86.7" lengthAdjust="spacing" font-family="Liberation Sans" stroke="#141414" stroke-width="0.08">Технические параметры:</text>
<path d="M1148.9 836.4 L1235.6 836.4" stroke="#161616" stroke-width="1" />
<text x="1148.9" y="851.5" font-size="7.2" fill="#141414" textLength="84.1" lengthAdjust="spacing" font-family="Liberation Sans" stroke="#141414" stroke-width="0.08">Обозначение - 998-20-0.</text>
<text x="1148.9" y="865.8" font-size="7.2" fill="#141414" textLength="93.0" lengthAdjust="spacing" font-family="Liberation Sans" stroke="#141414" stroke-width="0.08">Условный проход, DN - 20.</text>
<text x="1148.9" y="880.9" font-size="7.2" fill="#141414" textLength="106.3" lengthAdjust="spacing" font-family="Liberation Sans" stroke="#141414" stroke-width="0.08">Рабочая среда - вода или пар.</text>
<text x="1148.9" y="895" font-size="7.2" fill="#141414" textLength="212.4" lengthAdjust="spacing" font-family="Liberation Sans" stroke="#141414" stroke-width="0.08">Давление рабочей среды, МПа - 37,3 для воды, 25 для пара.</text>
<text x="1148.9" y="908.6" font-size="7.2" fill="#141414" textLength="219.4" lengthAdjust="spacing" font-family="Liberation Sans" stroke="#141414" stroke-width="0.08">Температура рабочей среды, °C - 280 для воды, 545 для пара.</text>
<text x="783.7" y="252" font-size="7.2" fill="#141414" textLength="96.9" lengthAdjust="spacing" font-family="Liberation Sans" stroke="#141414" stroke-width="0.08">Вентиль запорный 998-20-0</text>
<text x="824.8" y="260.1" font-size="7.2" fill="#141414" textLength="15.7" lengthAdjust="spacing" font-family="Liberation Sans" stroke="#141414" stroke-width="0.08">М1:1</text>
<path d="M654.3 294 L654.3 354" stroke="#1e1a10" stroke-width="1.1" />
<path d="M1012.3 294 L1012.3 354" stroke="#1e1a10" stroke-width="1.1" />
<path d="M651 294.9 L1015.5 294.9" stroke="#1e1a10" stroke-width="1.1" />
<path d="M650.8 298.7 L657.8 291.09999999999997" stroke="#1e1a10" stroke-width="1.3"/>
<path d="M1008.8 298.7 L1015.8 291.09999999999997" stroke="#1e1a10" stroke-width="1.3"/>
<text x="826.4" y="294" font-size="7" fill="#111" textLength="12.2" lengthAdjust="spacingAndGlyphs" font-family="Liberation Sans" stroke="#111" stroke-width="0.2">200</text>
<path d="M605 326.4 L818 326.4" stroke="#1e1a10" stroke-width="1.1" />
<path d="M609.3 326.4 L609.3 873.4" stroke="#1e1a10" stroke-width="1.1" />
<path d="M605.5 322.9 L613.0999999999999 329.9" stroke="#1e1a10" stroke-width="1.3"/>
<path d="M605.5 787.9 L613.0999999999999 794.9" stroke="#1e1a10" stroke-width="1.3"/>
<path d="M605.5 869.9 L613.0999999999999 876.9" stroke="#1e1a10" stroke-width="1.3"/>
<path d="M605 791.4 L691 791.4" stroke="#1e1a10" stroke-width="1.1" />
<path d="M605 873.4 L833 873.4" stroke="#1e1a10" stroke-width="1.1" />
<text x="0" y="0" font-size="7" fill="#111" stroke="#111" stroke-width="0.2" font-family="Liberation Sans" textLength="12" lengthAdjust="spacingAndGlyphs" transform="translate(608,564.5) rotate(-90)">260</text>
<text x="0" y="0" font-size="7" fill="#111" stroke="#111" stroke-width="0.2" font-family="Liberation Sans" textLength="8" lengthAdjust="spacingAndGlyphs" transform="translate(608,836) rotate(-90)">46</text>
<path d="M716 470.8 L776 470.8" stroke="#1e1a10" stroke-width="1.1" />
<path d="M716 504.7 L790 504.7" stroke="#1e1a10" stroke-width="1.1" />
<path d="M720 470.8 L720 504.7" stroke="#1e1a10" stroke-width="1.1" />
<path d="M716.2 467.3 L723.8 474.3" stroke="#1e1a10" stroke-width="1.3"/>
<path d="M716.2 501.2 L723.8 508.2" stroke="#1e1a10" stroke-width="1.3"/>
<text x="0" y="0" font-size="7" fill="#111" stroke="#111" stroke-width="0.2" font-family="Liberation Sans" textLength="8" lengthAdjust="spacingAndGlyphs" transform="translate(719,491.5) rotate(-90)">19</text>
<path d="M976 768.2 L1011 768.2" stroke="#1e1a10" stroke-width="1.1" />
<path d="M976 804.2 L1011 804.2" stroke="#1e1a10" stroke-width="1.1" />
<path d="M1007.4 764 L1007.4 808" stroke="#1e1a10" stroke-width="1.1" />
<path d="M1003.6 764.7 L1011.1999999999999 771.7" stroke="#1e1a10" stroke-width="1.3"/>
<path d="M1003.6 800.7 L1011.1999999999999 807.7" stroke="#1e1a10" stroke-width="1.3"/>
<text x="0" y="0" font-size="7" fill="#111" stroke="#111" stroke-width="0.2" font-family="Liberation Sans" textLength="8" lengthAdjust="spacingAndGlyphs" transform="translate(1005,790.5) rotate(-90)">20</text>
<path d="M690.7 810 L690.7 902" stroke="#1e1a10" stroke-width="1.1" />
<path d="M976.3 806 L976.3 902" stroke="#1e1a10" stroke-width="1.1" />
<path d="M688 902 L979 902" stroke="#1e1a10" stroke-width="1.1" />
<path d="M687.2 905.8 L694.2 898.2" stroke="#1e1a10" stroke-width="1.3"/>
<path d="M972.8 905.8 L979.8 898.2" stroke="#1e1a10" stroke-width="1.3"/>
<text x="826.4" y="902.5" font-size="7" fill="#111" textLength="12.2" lengthAdjust="spacingAndGlyphs" font-family="Liberation Sans" stroke="#111" stroke-width="0.2">160</text>
<path d="M783.5 726.5 L786.4 733 L786.4 751 Q786 766 765.1 771.5 L756.9 771.5 L702.1 758.4 L691.1 769 L691.1 810.7 L702.1 824.7 L810.1 851.7 L817.5 870.5 L833 873.8 L846.9 870.5 L850.2 850.8 Q862 838 865 829.6 Q869 812 882.2 800.1 Q887 797.8 892 798.5 L967.3 815.7 L976.3 805.8 L976.3 764.1 L968.9 751.8 L884.6 730.5 L882.6 726.5 Z" fill="url(#hatch)"/>
<path d="M691.1 775.6 L815.8 805 L815.8 726.5 L850.3 726.5 L850.3 735.5 L976.3 767.4 L976.3 804.2 L850.3 771.5 L850.3 831.2 L844.5 836.1 L840.4 841 L815.8 841 L691.1 810 Z" fill="#dfd5ae"/>
<path d="M691.1 775.6 L815.8 805 L815.8 726.5 M850.3 728 L850.3 735.5 L976.3 767.4 M976.3 804.2 L850.3 771.5 L850.3 831.2 L844.5 836.1 L840.4 841 L815.8 841 L691.1 810" stroke="#111" stroke-width="1" fill="none"/>
<path d="M783.5 726.5 L786.4 733 L786.4 751 Q786 766 765.1 771.5 L756.9 771.5 L702.1 758.4 L691.1 769 L691.1 810.7 L702.1 824.7 L810.1 851.7 L817.5 870.5 L833 873.8 L846.9 870.5 L850.2 850.8 Q862 838 865 829.6 Q869 812 882.2 800.1 Q887 797.8 892 798.5 L967.3 815.7 L976.3 805.8 L976.3 764.1 L968.9 751.8 L884.6 730.5 L882.6 726.5 Z" fill="none" stroke="#000" stroke-width="3" stroke-linejoin="round"/>
<rect x="654.5" y="355.7" width="357" height="21" stroke="#000" stroke-width="3" fill="none"/>
<rect x="809.4" y="352" width="47" height="3" stroke="#555" stroke-width="0.8" fill="none"/>
<rect x="812" y="333.4" width="41.8" height="19" stroke="#555" stroke-width="0.9" fill="none"/><path d="M820.4 334 V352 M845.2 334 V352" stroke="#666" stroke-width="1.3"/>
<path d="M817.5 335.5 V330 Q817.5 327 821 327 H846 Q849 327 849 330 V335.5" stroke="#000" stroke-width="2.8" fill="none"/><path d="M819 329.5 H847.5" stroke="#000" stroke-width="3"/>
<path d="M814.4 377 V486 L821 494 V504.7 H845 V494 L851.5 486 V377 M814.4 486 H851.5 M821 494 H845" stroke="#000" stroke-width="2.6" fill="none" stroke-linejoin="round"/>
<path d="M814.4 403 H788.5 V415.4 C780 428 770 438 757 447 C746 455 742.7 462 742.7 475 V641 Q743 660 756 672 L779.5 690 L780.2 715 Q781 722 783.5 726.5 H882.5 Q885 722 885.8 715 L886.5 690 L910 672 Q923 660 923.3 641 V475 C923.3 462 920 455 909 447 C896 438 886 428 877.5 415.4 V403 H851.5" stroke="#000" stroke-width="3" fill="none" stroke-linejoin="round"/>
<path d="M814.4 470.8 H784 Q775.8 470.8 775.8 479 V643 L784.5 650.5 H806.2 V632 H800.2 V626 H793.5 L788.8 618 V587 H818 V571 H849 V587 H877.5 V618 L872.5 626 H866 V632 H860 V650.5 H881.5 L890.5 643 V479 Q890.5 470.8 882 470.8 H851.5" stroke="#000" stroke-width="3" fill="none" stroke-linejoin="round"/>
<path d="M782.3 566.5 V513 Q782.3 504.7 790.5 504.7 H875.5 Q883.7 504.7 883.7 513 V566.5 Z" stroke="#222" stroke-width="1.1" fill="none"/>
<path d="M776 519.5 Q780 519 782.3 515 M776 550 Q780 550 782.3 554" stroke="#222" stroke-width="1" fill="none"/>
<rect x="821.6" y="566.2" width="22.6" height="4" stroke="#000" stroke-width="1.8" fill="none"/>
<circle cx="795" cy="533.9" r="6.3" stroke="#2828a0" stroke-width="1.1" fill="none"/>
<path d="M786 533.9 H804 M795 524.5 V543.5" stroke="#3a3ae0" stroke-width="1.3"/>
<circle cx="870.9" cy="533.9" r="6.3" stroke="#2828a0" stroke-width="1.1" fill="none"/>
<path d="M861.9 533.9 H879.9 M870.9 524.5 V543.5" stroke="#3a3ae0" stroke-width="1.3"/>
<path d="M833 316 V892" stroke="#3a3ae0" stroke-width="1.3" stroke-dasharray="14.4 2.2 2.4 3.2"/>
<path d="M676.2 786.6 L881.6 841.2" stroke="#3a3ae0" stroke-width="1.3" stroke-dasharray="14.4 2.2 2.4 3.2"/>
<path d="M766 730.5 L992.3 789.8" stroke="#3a3ae0" stroke-width="1.3" stroke-dasharray="14.4 2.2 2.4 3.2"/>
<circle cx="1410" cy="283" r="53" stroke="#ece6d0" stroke-width="12" fill="none" opacity="0.6"/>
<rect x="1384.5" y="257.5" width="51" height="51" fill="#e9e5d6" stroke="#8f8c80" stroke-width="1"/>
<rect x="1394" y="267" width="32" height="31.5" fill="#d6d3c6" />
<text x="1410.5" y="288" font-size="15" fill="#7c7a70" text-anchor="middle" textLength="44" lengthAdjust="spacingAndGlyphs" font-family="Liberation Sans" >Сверху</text>
<text x="1409.5" y="235.3" font-size="22" fill="none" text-anchor="middle" textLength="13" lengthAdjust="spacingAndGlyphs" font-family="Liberation Sans" stroke="#a8a496" stroke-width="0.8">С</text>
<text x="1353.5" y="291.8" font-size="22" fill="none" text-anchor="middle" textLength="12" lengthAdjust="spacingAndGlyphs" font-family="Liberation Sans" stroke="#a8a496" stroke-width="0.8">З</text>
<text x="1466" y="291.8" font-size="22" fill="none" text-anchor="middle" textLength="11" lengthAdjust="spacingAndGlyphs" font-family="Liberation Sans" stroke="#a8a496" stroke-width="0.8">В</text>
<text x="1410" y="348.3" font-size="22" fill="none" text-anchor="middle" textLength="19" lengthAdjust="spacingAndGlyphs" font-family="Liberation Sans" stroke="#a8a496" stroke-width="0.8">Ю</text>
<rect x="1386.5" y="370.5" width="46" height="16.5" rx="3" fill="#e6e0ca"/>
<text x="1390.4" y="382.5" font-size="11" fill="#8a887e" textLength="22.6" lengthAdjust="spacingAndGlyphs" font-family="Liberation Sans" >МСК</text>
<path d="M1419 377 H1428 L1423.5 381.5 Z" stroke="#a8a496" stroke-width="0.8" fill="none"/>
<rect x="20.5" y="980.5" width="9" height="9" stroke="#111" stroke-width="1.3" fill="none"/>
<path d="M24.5 915 L24.5 980.5" stroke="#111" stroke-width="1.2" />
<path d="M29.5 985 L75 985" stroke="#111" stroke-width="1.2" />
<path d="M79 972 L92 985 M92 972 L79 985" stroke="#111" stroke-width="1.5"/>
<path d="M27.5 919 L32 925 L38 918.5 M32 925 V932" stroke="#111" stroke-width="1.3" fill="none"/>
<path d="M1444 1005.3 L1490 1005.3" stroke="#111" stroke-width="1.2" />
<rect x="1489.5" y="1002.5" width="3" height="4" stroke="#111" stroke-width="1" fill="#f0ecd8"/>
<rect x="0" y="1007" width="1496" height="32" fill="#222731" />
<rect x="1" y="1007" width="3" height="32" fill="#3a4454" />
<rect x="1493" y="1007" width="3" height="32" fill="#3a4454" />
<rect x="0" y="1035.5" width="1496" height="3.5" fill="#343b48" />
<path d="M16 1008 H83 L79 1021 Q78 1025 73 1025 H27 Q22 1025 21 1021 Z" fill="#3b4453"/>
<path d="M86 1008 H136 L133 1021 Q132 1025 128 1025 H96 Q91 1025 90 1021 Z" fill="#2c333f"/>
<path d="M141.7 1008 H191 L188 1021 Q187 1025 183 1025 H151 Q146 1025 145 1021 Z" fill="#2c333f"/>
<path d="M198 1008 H220.6 L218 1021 Q217 1025 213 1025 H205 Q201 1025 200.5 1021 Z" fill="#2c333f"/>
<text x="27.5" y="1020.5" font-size="12.4" fill="#f4f4f4" font-weight="bold" textLength="45.2" lengthAdjust="spacingAndGlyphs" font-family="Liberation Sans" >Модель</text>
<text x="95.7" y="1020.5" font-size="12.4" fill="#b8bec8" textLength="32.1" lengthAdjust="spacingAndGlyphs" font-family="Liberation Sans" >Лист1</text>
<text x="151" y="1020.5" font-size="12.4" fill="#b8bec8" textLength="32" lengthAdjust="spacingAndGlyphs" font-family="Liberation Sans" >Лист2</text>
<path d="M205.5 1016 H214.5 M210 1011.5 V1020.5" stroke="#c8ccd4" stroke-width="1.8"/>
<rect x="845" y="1009" width="55.700000000000045" height="24" fill="#3b4453" />
<rect x="904" y="1009" width="62.799999999999955" height="24" fill="#3b4453" />
<rect x="970" y="1009" width="101.59999999999991" height="24" fill="#3b4453" />
<rect x="1072.7" y="1009" width="139.29999999999995" height="24" fill="#3b4453" />
<rect x="1214" y="1009" width="107.29999999999995" height="24" fill="#3b4453" />
<rect x="1324" y="1009" width="39.299999999999955" height="24" fill="#3b4453" />
<rect x="1364" y="1009" width="24.700000000000045" height="24" fill="#3b4453" />
<rect x="1391" y="1009" width="24" height="24" fill="#3b4453" />
<rect x="1418" y="1009" width="21.59999999999991" height="24" fill="#3b4453" />
<rect x="1442.6" y="1009" width="49.40000000000009" height="24" fill="#3b4453" />
<rect x="995" y="1010" width="22" height="22" fill="#5b8ac4" />
<rect x="1073.8" y="1010" width="22.200000000000045" height="22" fill="#5b8ac4" />
<rect x="1097.7" y="1010" width="22.299999999999955" height="22" fill="#5b8ac4" />
<rect x="1137.8" y="1010" width="22.200000000000045" height="22" fill="#5b8ac4" />
<rect x="1162.7" y="1010" width="22.5" height="22" fill="#5b8ac4" />
<rect x="1189.6" y="1010" width="22.40000000000009" height="22" fill="#5b8ac4" />
<rect x="1216.6" y="1010" width="22.40000000000009" height="22" fill="#5b8ac4" />
<text x="848.4" y="1025.4" font-size="12.6" fill="#eef0f2" textLength="49.4" lengthAdjust="spacingAndGlyphs" font-family="Liberation Sans" >МОДЕЛЬ</text>
<path d="M911 1014 V1028 M916 1014 V1028 M921 1014 V1028 M908 1017 H923.5 M908 1021.5 H923.5 M908 1026 H923.5" stroke="#eee" stroke-width="1.4"/>
<g fill="#eee"><rect x="934.0" y="1014.5" width="2" height="2"/><rect x="934.0" y="1020.0" width="2" height="2"/><rect x="934.0" y="1025.5" width="2" height="2"/><rect x="939.5" y="1014.5" width="2" height="2"/><rect x="939.5" y="1020.0" width="2" height="2"/><rect x="939.5" y="1025.5" width="2" height="2"/><rect x="945.0" y="1014.5" width="2" height="2"/><rect x="945.0" y="1020.0" width="2" height="2"/><rect x="945.0" y="1025.5" width="2" height="2"/></g>
<path d="M956.0 1019.5 H963.0 L959.5 1023 Z" fill="#d8dce2"/>
<path d="M974.5 1014 V1028 H990 M974.5 1023.5 H979 V1028" stroke="#e8e8e8" stroke-width="1.3" fill="none"/>
<circle cx="1004" cy="1022" r="6" stroke="#fff" stroke-width="1.5" fill="none"/><path d="M1004 1022 L1014 1013 M1004 1022 H1013" stroke="#fff" stroke-width="1.5"/>
<path d="M1022.0 1019.5 H1029.0 L1025.5 1023 Z" fill="#d8dce2"/>
<path d="M1038 1014 L1051 1028" stroke="#e04848" stroke-width="1.4"/><path d="M1044.5 1013 V1029" stroke="#40c080" stroke-width="1.4"/><circle cx="1044.5" cy="1021" r="1.8" fill="#eee"/>
<path d="M1061.0 1019.5 H1068.0 L1064.5 1023 Z" fill="#d8dce2"/>
<path d="M1077 1028 L1090 1016 M1077 1028 H1092" stroke="#fff" stroke-width="1.5" fill="none"/><rect x="1082" y="1020" width="4" height="4" fill="#fff"/>
<rect x="1104.5" y="1015.5" width="12" height="12" stroke="#fff" stroke-width="1.5" fill="none"/><rect x="1100" y="1012" width="5" height="5" stroke="#fff" stroke-width="1.2" fill="#5b8ac4"/>
<path d="M1125.0 1019.5 H1132.0 L1128.5 1023 Z" fill="#d8dce2"/>
<g fill="#fff"><rect x="1141" y="1014" width="16" height="2.2"/><rect x="1141" y="1018.5" width="12" height="2.8"/><rect x="1141" y="1023.5" width="16" height="3.8"/></g>
<rect x="1169" y="1018" width="13" height="11" fill="#fff"/><rect x="1166" y="1015" width="11" height="10" fill="#dfe6f0" stroke="#5b8ac4" stroke-width="0.8"/><path d="M1165 1012.5 V1017.5 M1162.5 1015 H1167.5" stroke="#fff" stroke-width="1.2"/>
<path d="M1193.5 1014 V1028 H1208 M1190.5 1017 L1193.5 1013.5 L1196.5 1017 M1205 1025 L1208.5 1028 L1205 1031" stroke="#fff" stroke-width="1.5" fill="none"/><path d="M1202 1014 L1198 1020 H1202 L1199 1025" stroke="#fff" stroke-width="1.3" fill="none"/>
<path d="M1227.5 1013 L1222 1028 L1227.5 1024 L1233 1028 Z" fill="#fff"/><circle cx="1234" cy="1015.5" r="3" stroke="#fff" stroke-width="1.2" fill="none"/>
<path d="M1250 1013 L1244 1028 L1250 1024 L1256 1028 Z" fill="#e0e0e0"/><path d="M1256 1012 L1253 1017 H1257 L1254 1021" stroke="#e0e0e0" stroke-width="1.3" fill="none"/>
<path d="M1276 1013 L1269.5 1028 L1276 1024 L1282.5 1028 Z" fill="#e0e0e0"/>
<text x="1293" y="1026" font-size="12.4" fill="#e8e8e8" font-weight="bold" textLength="12.5" lengthAdjust="spacingAndGlyphs" font-family="Liberation Sans" >1:1</text>
<path d="M1310.0 1019.5 H1317.0 L1313.5 1023 Z" fill="#d8dce2"/>
<circle cx="1335.5" cy="1021" r="5.5" fill="#e0e0e0"/><circle cx="1335.5" cy="1021" r="2.2" fill="#3b4453"/><rect x="1334" y="1013" width="3" height="3.5" fill="#e0e0e0" transform="rotate(0 1335.5 1021)"/><rect x="1334" y="1013" width="3" height="3.5" fill="#e0e0e0" transform="rotate(45 1335.5 1021)"/><rect x="1334" y="1013" width="3" height="3.5" fill="#e0e0e0" transform="rotate(90 1335.5 1021)"/><rect x="1334" y="1013" width="3" height="3.5" fill="#e0e0e0" transform="rotate(135 1335.5 1021)"/><rect x="1334" y="1013" width="3" height="3.5" fill="#e0e0e0" transform="rotate(180 1335.5 1021)"/><rect x="1334" y="1013" width="3" height="3.5" fill="#e0e0e0" transform="rotate(225 1335.5 1021)"/><rect x="1334" y="1013" width="3" height="3.5" fill="#e0e0e0" transform="rotate(270 1335.5 1021)"/><rect x="1334" y="1013" width="3" height="3.5" fill="#e0e0e0" transform="rotate(315 1335.5 1021)"/>
<path d="M1352.0 1019.5 H1359.0 L1355.5 1023 Z" fill="#d8dce2"/>
<path d="M1376 1013 V1029 M1368 1021 H1384.5" stroke="#f0f0f0" stroke-width="2"/>
<rect x="1395.5" y="1012.5" width="7" height="7" stroke="#e8e8e8" stroke-width="1.1" fill="none"/><circle cx="1407" cy="1019" r="3.5" stroke="#e8e8e8" stroke-width="1.1" fill="none"/><path d="M1401 1022 L1397 1028.5 H1405 Z" stroke="#e8e8e8" stroke-width="1.1" fill="none"/>
<rect x="1422" y="1015" width="12" height="9" fill="#3c70c0"/><path d="M1430 1015 L1434 1019" stroke="#9ac" stroke-width="1"/><rect x="1420.5" y="1022" width="7" height="5.5" fill="#f0b830"/><path d="M1427 1025 L1430 1028 L1436 1021" stroke="#50b060" stroke-width="2" fill="none"/><path d="M1424.5 1012 V1022 M1420 1016 H1430" stroke="#fff" stroke-width="1.1"/><circle cx="1424.5" cy="1016" r="1.8" stroke="#fff" stroke-width="1" fill="#3c70c0"/>
<rect x="1447.5" y="1015" width="15" height="12" stroke="#eee" stroke-width="1.1" fill="none"/><path d="M1450.5 1024 L1454 1020.5 M1450.5 1024 V1021.5 M1450.5 1024 H1453 M1459.5 1018 L1456 1021.5 M1459.5 1018 V1020.5 M1459.5 1018 H1457" stroke="#eee" stroke-width="1.1" fill="none"/>
<path d="M1471 1014.5 H1487 M1471 1020.5 H1487 M1471 1026.5 H1487" stroke="#f0f0f0" stroke-width="2"/>
</svg>
</body></html>
